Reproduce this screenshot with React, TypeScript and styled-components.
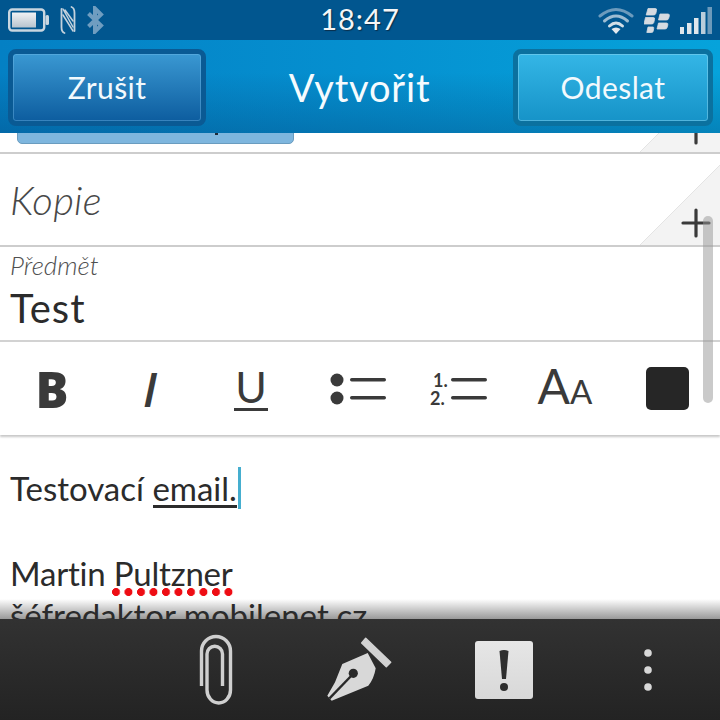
import React from 'react';
import styled, { createGlobalStyle } from 'styled-components';

const Global = createGlobalStyle`
  html, body {
    margin: 0;
    padding: 0;
    background: #fff;
  }
  body {
    font-family: "Lato", "Liberation Sans", sans-serif;
  }
`;

const Screen = styled.div`
  width: 720px;
  height: 720px;
  position: relative;
  overflow: hidden;
  display: flex;
  flex-direction: column;
  background: #fff;
`;

const StatusBar = styled.div`
  height: 40px;
  flex: none;
  background: #01568f;
  display: grid;
  grid-template-columns: 1fr auto 1fr;
  align-items: center;
  padding: 0 8px;
  box-sizing: border-box;
`;

const StatusGroup = styled.div<{ $end?: boolean }>`
  display: flex;
  align-items: center;
  justify-content: ${(p) => (p.$end ? 'flex-end' : 'flex-start')};
  gap: ${(p) => (p.$end ? '10px' : '11px')};
`;

const Clock = styled.div`
  font-size: 29px;
  line-height: 38px;
  margin-bottom: 2px;
  color: #f4f6f8;
  letter-spacing: 1px;
  text-shadow: 1px 1px 1px #0a2e4a;
`;

const TitleBar = styled.div`
  height: 93px;
  flex: none;
  background: linear-gradient(90deg, #0480c4 0%, #0590d0 50%, #06a3db 100%);
  position: relative;
  z-index: 2;
  display: grid;
  grid-template-columns: 198px 1fr 200px;
  align-items: center;
  padding: 8px 7px 7px 8px;
  box-sizing: border-box;
  &::after {
    content: '';
    position: absolute;
    inset: 0;
    background: linear-gradient(180deg, rgba(0, 40, 90, 0) 35%, rgba(0, 40, 90, 0.26) 100%);
    pointer-events: none;
  }
`;

const ActionButton = styled.div<{ $light?: boolean }>`
  position: relative;
  z-index: 1;
  height: 77px;
  box-sizing: border-box;
  border-radius: 8px;
  border: 5px solid ${(p) => (p.$light ? '#0b719f' : '#0a5a94')};
  background: ${(p) =>
    p.$light
      ? 'linear-gradient(180deg, #34b6e6 0%, #1693c8 100%)'
      : 'linear-gradient(180deg, #3a98d2 0%, #0d5d9f 100%)'};
  background-clip: padding-box;
  box-shadow: inset 0 0 0 1px ${(p) => (p.$light ? 'rgba(150, 220, 245, 0.45)' : 'rgba(120, 190, 235, 0.4)')};
  display: flex;
  align-items: center;
  justify-content: center;
  color: #f2f9fd;
  font-size: 30px;
  letter-spacing: 0.4px;
`;

const Heading = styled.div`
  position: relative;
  z-index: 1;
  text-align: center;
  color: #f5fbfe;
  font-size: 38px;
  letter-spacing: 0.8px;
`;

const Fields = styled.div`
  flex: none;
  position: relative;
`;

const ToRow = styled.div`
  height: 21px;
  box-sizing: border-box;
  position: relative;
  border-bottom: 2px solid #cdcdcd;
  overflow: hidden;
  background: #fff;
`;

const Chip = styled.div`
  position: absolute;
  top: -12px;
  left: 17px;
  width: 277px;
  height: 23px;
  box-sizing: border-box;
  background: #7eb6de;
  border: 1px solid #6a9cbf;
  border-radius: 0 0 5px 5px;
`;

const ChipDot = styled.div`
  position: absolute;
  top: 11px;
  left: 197px;
  width: 3px;
  height: 2px;
  background: #1f2a36;
`;

const CopyRow = styled.div`
  height: 93px;
  box-sizing: border-box;
  border-bottom: 2px solid #cdcdcd;
  position: relative;
  display: flex;
  align-items: center;
  padding: 1px 0 0 10px;
  font-size: 40px;
  font-style: italic;
  font-weight: 300;
  letter-spacing: 0.3px;
  color: #484848;
  overflow: hidden;
`;

const Corner = styled.svg`
  position: absolute;
  right: 0;
  bottom: 0;
`;

const SubjectRow = styled.div`
  height: 95px;
  box-sizing: border-box;
  border-bottom: 2px solid #d2d2d2;
  padding: 2px 0 0 10px;
`;

const SubjectLabel = styled.div`
  font-size: 26px;
  font-style: italic;
  font-weight: 300;
  color: #505050;
  line-height: 32px;
`;

const SubjectValue = styled.div`
  font-size: 40px;
  letter-spacing: 1px;
  color: #2b2b2b;
  line-height: 46px;
  margin-top: 4px;
`;

const FormatBar = styled.div`
  height: 93px;
  box-sizing: border-box;
  position: relative;
  z-index: 1;
  background: #fff;
  box-shadow: 0 2px 2px rgba(0, 0, 0, 0.22);
  display: flex;
  align-items: center;
`;

const Tool = styled.div<{ $w: number }>`
  width: ${(p) => p.$w}px;
  flex: none;
  display: flex;
  justify-content: center;
  color: #3a3a3a;
`;

const Glyph = styled.span<{ $kind: 'b' | 'i' }>`
  font-family: "Open Sans", "Liberation Sans", sans-serif;
  font-size: ${(p) => (p.$kind === 'b' ? '49px' : '47px')};
  font-weight: ${(p) => (p.$kind === 'b' ? 800 : 600)};
  font-style: ${(p) => (p.$kind === 'i' ? 'italic' : 'normal')};
  line-height: 50px;
`;

const Underlined = styled.span`
  display: inline-block;
  line-height: 42px;
  height: 42px;
  font-size: 43px;
  border-bottom: 3px solid #3a3a3a;
  padding: 0 1px;
`;

const FontSize = styled.span`
  font-size: 48px;
  line-height: 50px;
  color: #3a3a3a;
  & small {
    font-size: 33px;
  }
`;

const ColorSwatch = styled.div`
  width: 43px;
  height: 43px;
  border-radius: 5px;
  background: #262626;
`;

const Body = styled.div`
  flex: 1;
  position: relative;
  z-index: 1;
  padding: 31px 0 0 10px;
  font-size: 33px;
  color: #2b2b2b;
  line-height: 44px;
`;

const BodyLine = styled.div<{ $gap?: number; $tight?: boolean }>`
  margin-top: ${(p) => p.$gap ?? 0}px;
  letter-spacing: ${(p) => (p.$tight ? '-0.2px' : '0')};
  white-space: nowrap;
  height: 44px;
`;

const Marked = styled.span`
  position: relative;
  &::after {
    content: '';
    position: absolute;
    left: 1px;
    right: 0;
    bottom: 0;
    height: 3px;
    background: #2b2b2b;
  }
`;

const Caret = styled.span`
  display: inline-block;
  width: 3px;
  height: 42px;
  background: #45aecf;
  vertical-align: -8px;
  margin-left: 1px;
`;

const Misspelled = styled.span`
  position: relative;
  &::after {
    content: '';
    position: absolute;
    left: -2px;
    width: 122px;
    bottom: -3px;
    height: 8px;
    background: radial-gradient(circle at 4px 4px, #ee0d14 3.7px, transparent 4.3px) 0 0 / 12.5px 8px repeat-x;
  }
`;

const Scrollbar = styled.div`
  position: absolute;
  z-index: 2;
  top: 216px;
  left: 703px;
  width: 10px;
  height: 187px;
  border-radius: 5px;
  background: rgba(150, 150, 150, 0.5);
`;

const BarShade = styled.div`
  position: absolute;
  left: 0;
  right: 0;
  bottom: 101px;
  height: 20px;
  background: linear-gradient(180deg, rgba(120, 120, 120, 0) 0%, rgba(120, 120, 120, 0.75) 100%);
`;

const BottomBar = styled.div`
  position: absolute;
  z-index: 3;
  left: 0;
  right: 0;
  bottom: 0;
  height: 101px;
  padding-left: 144px;
  box-sizing: border-box;
  background: linear-gradient(180deg, #323232 0%, #232323 100%);
  display: grid;
  grid-template-columns: repeat(4, 144px);
  align-items: center;
`;

const BarIcon = styled.div`
  display: flex;
  justify-content: center;
`;

const BatteryIcon = () => (
  <svg width="41" height="24" viewBox="0 0 41 24">
    <defs>
      <linearGradient id="batt" x1="0" y1="0" x2="0" y2="1">
        <stop offset="0" stopColor="#f0f2f4" />
        <stop offset="1" stopColor="#b8c4ce" />
      </linearGradient>
    </defs>
    <rect x="1.2" y="1.5" width="35" height="21" rx="3" fill="none" stroke="#c9d6e0" strokeWidth="2.4" />
    <rect x="4" y="4.5" width="24" height="15" fill="url(#batt)" />
    <rect x="37.5" y="7" width="3.5" height="10" rx="1.5" fill="#c9d6e0" />
  </svg>
);

const NfcIcon = () => (
  <svg width="16" height="28" viewBox="0 0 16 28" fill="none" stroke="#c4d2dd" strokeLinecap="round">
    <path d="M1.5 3 L1.5 21 Q1.5 26 4.5 27" strokeWidth="1.8" />
    <path d="M14.5 25 L14.5 7 Q14.5 2 11.5 1" strokeWidth="1.8" />
    <path d="M3 3 L13 21 M3 9 L13 25 M5 4 L13 15" strokeWidth="1.5" />
  </svg>
);

const BluetoothIcon = () => (
  <svg width="17" height="28" viewBox="0 0 17 28" fill="none" stroke="#6f9dc0" strokeWidth="4">
    <path d="M1.5 7.5 L14 19.5 L8 25.5 L8 2.5 L14 8.5 L1.5 20.5" />
  </svg>
);

const WifiIcon = () => (
  <svg width="36" height="27" viewBox="0 0 36 27" fill="none" strokeLinecap="round">
    <path d="M2 9 Q18 -4 34 9" stroke="#6c9bbd" strokeWidth="3" />
    <path d="M6.5 14 Q18 4 29.5 14" stroke="#9dbcd2" strokeWidth="3" />
    <path d="M11.5 19 Q18 13 24.5 19" stroke="#d4dfe7" strokeWidth="3" />
    <path d="M13.5 22 L18 27 L22.5 22 Q18 19 13.5 22 Z" fill="#e4e9ee" />
  </svg>
);

const BlackBerryIcon = () => (
  <svg width="26" height="25" viewBox="0 0 26 25" fill="#d5dbe1" stroke="#d5dbe1" strokeWidth="0.8" strokeLinejoin="round">
    <path d="M4 0.5 H11.5 Q13 0.5 12.5 2.5 L11.8 5.5 Q11.4 7 9.5 7 H2.2 Z" />
    <path d="M1.5 9.5 H9.5 Q11 9.5 10.5 11.5 L9.8 14.5 Q9.4 16 7.5 16 H0 Z" />
    <path d="M16 6 H24 Q25.8 6 25.3 8 L24.6 10.5 Q24.2 12 22.4 12 H14.5 Z" />
    <path d="M14.5 15 H22.5 Q24.3 15 23.8 17 L23.1 19.5 Q22.7 21 20.9 21 H13 Z" />
    <path d="M4 19 H9 Q10 19 9.7 20.5 L9.2 23 Q9 24.5 7.5 24.5 H2.8 Z" />
  </svg>
);

const SignalIcon = () => (
  <svg width="32" height="27" viewBox="0 0 32 27">
    <rect x="0" y="20" width="4" height="7" fill="#dfe6ec" />
    <rect x="7" y="16" width="4.5" height="11" fill="#dfe6ec" />
    <rect x="14" y="11" width="4.5" height="16" fill="#dfe6ec" />
    <rect x="21" y="5" width="4.5" height="22" fill="#b9cddb" />
    <rect x="27.5" y="0" width="4.5" height="27" fill="#6d9abb" />
  </svg>
);

const PlusMark = () => (
  <Corner width={80} height={80} viewBox="0 0 80 80">
    <polygon points="80,0 80,80 0,80" fill="#f3f3f3" />
    <path d="M0 80 L80 0" stroke="#e4e4e4" strokeWidth="1" />
    <path d="M43 58 H69 M56 45 V71" stroke="#3a3a3a" strokeWidth="3.2" strokeLinecap="round" />
  </Corner>
);

const BulletIcon = () => (
  <svg width="57" height="34" viewBox="0 0 57 34" fill="#3a3a3a">
    <circle cx="7" cy="8" r="6.5" />
    <circle cx="7" cy="26" r="6.5" />
    <rect x="20" y="6" width="36" height="3.5" rx="1.7" />
    <rect x="20" y="24" width="36" height="3.5" rx="1.7" />
  </svg>
);

const NumberedIcon = () => (
  <svg width="57" height="42" viewBox="0 0 57 42" fill="#3a3a3a">
    <text x="3" y="19" fontFamily="Lato, sans-serif" fontSize="18" fontWeight="700">1.</text>
    <text x="0" y="37" fontFamily="Lato, sans-serif" fontSize="18" fontWeight="700">2.</text>
    <rect x="21" y="10" width="36" height="3.5" rx="1.7" />
    <rect x="21" y="28" width="36" height="3.5" rx="1.7" />
  </svg>
);

const PaperclipIcon = () => (
  <svg width="34" height="72" viewBox="0 0 34 72" fill="none" stroke="#cfcfcf" strokeWidth="3.4">
    <path d="M2.5 52 V17 A14.5 14.5 0 0 1 31.5 17 V56 A11.75 13 0 0 1 8 56 V20 A7.75 7.75 0 0 1 23.5 20 V52" />
  </svg>
);

const PenIcon = () => (
  <svg width="66" height="66" viewBox="0 0 66 66">
    <path d="M38.7 1.3 L63.7 25.3 L59.3 29.7 L34.7 6 Z" fill="#d2d2d2" stroke="#d2d2d2" strokeWidth="1.5" strokeLinejoin="round" />
    <path d="M40.7 16 L48.7 31.3 Q47 42 41.3 48.7 L4.7 63.7 L0.3 58.7 L8 45.3 L15.3 27 Z" fill="#d8d8d8" />
    <circle cx="26.3" cy="36.3" r="4.6" fill="#292929" />
    <path d="M26 37 L2.5 61.3" stroke="#292929" strokeWidth="2.4" />
  </svg>
);

const PriorityIcon = () => (
  <svg width="58" height="58" viewBox="0 0 58 58">
    <defs>
      <linearGradient id="prio" x1="0" y1="0" x2="0" y2="1">
        <stop offset="0" stopColor="#e6e6e6" />
        <stop offset="1" stopColor="#d8d8d8" />
      </linearGradient>
    </defs>
    <rect width="58" height="58" rx="3" fill="url(#prio)" />
    <path d="M24.5 10 Q29 8 33.5 10 L31 38 H27 Z" fill="#2e2e2e" />
    <circle cx="29" cy="46" r="4" fill="#2e2e2e" />
  </svg>
);

const MoreIcon = () => (
  <svg width="8" height="42" viewBox="0 0 8 42" fill="#d8d8d8">
    <circle cx="4" cy="4" r="3.8" />
    <circle cx="4" cy="21" r="3.8" />
    <circle cx="4" cy="38" r="3.8" />
  </svg>
);

export default function App() {
  return (
    <Screen>
      <Global />
      <StatusBar>
        <StatusGroup>
          <BatteryIcon />
          <NfcIcon />
          <BluetoothIcon />
        </StatusGroup>
        <Clock>18:47</Clock>
        <StatusGroup $end>
          <WifiIcon />
          <BlackBerryIcon />
          <SignalIcon />
        </StatusGroup>
      </StatusBar>
      <TitleBar>
        <ActionButton>Zrušit</ActionButton>
        <Heading>Vytvořit</Heading>
        <ActionButton $light>Odeslat</ActionButton>
      </TitleBar>
      <Fields>
        <ToRow>
          <Chip>
            <ChipDot />
          </Chip>
          <PlusMark />
        </ToRow>
        <CopyRow>
          Kopie
          <PlusMark />
        </CopyRow>
        <SubjectRow>
          <SubjectLabel>Předmět</SubjectLabel>
          <SubjectValue>Test</SubjectValue>
        </SubjectRow>
        <FormatBar>
          <Tool $w={104}><Glyph $kind="b">B</Glyph></Tool>
          <Tool $w={92}><Glyph $kind="i">I</Glyph></Tool>
          <Tool $w={110}><Underlined>U</Underlined></Tool>
          <Tool $w={104}><BulletIcon /></Tool>
          <Tool $w={96}><NumberedIcon /></Tool>
          <Tool $w={118}><FontSize>A<small>A</small></FontSize></Tool>
          <Tool $w={86}><ColorSwatch /></Tool>
        </FormatBar>
      </Fields>
      <BarShade />
      <Body>
        <BodyLine>
          Testovací <Marked>email.</Marked>
          <Caret />
        </BodyLine>
        <BodyLine $gap={41} $tight>
          Martin <Misspelled>Pultzner</Misspelled>
        </BodyLine>
        <BodyLine $gap={-2}>šéfredaktor mobilenet.cz</BodyLine>
      </Body>
      <Scrollbar />
      <BottomBar>
        <BarIcon><PaperclipIcon /></BarIcon>
        <BarIcon><PenIcon /></BarIcon>
        <BarIcon><PriorityIcon /></BarIcon>
        <BarIcon><MoreIcon /></BarIcon>
      </BottomBar>
    </Screen>
  );
}
